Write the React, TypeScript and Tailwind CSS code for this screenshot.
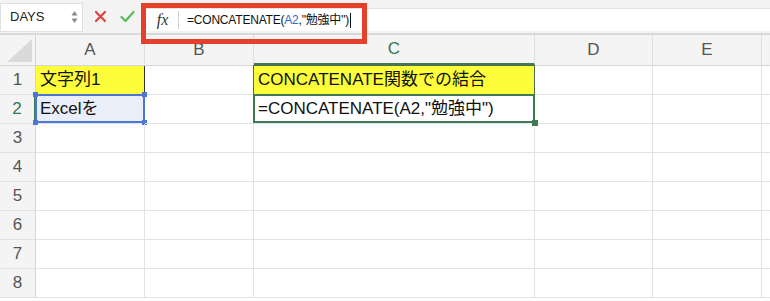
import React from 'react';

const FONT = { fontFamily: '"Liberation Sans", "Noto Sans CJK JP", sans-serif' };

const COLS = [
  { key: 'A', w: 'w-[109px]' },
  { key: 'B', w: 'w-[109px]' },
  { key: 'C', w: 'w-[281px]' },
  { key: 'D', w: 'w-[118px]' },
  { key: 'E', w: 'w-[109px]' },
];

const ROWS = [1, 2, 3, 4, 5, 6, 7, 8];

const Handle: React.FC<{ className: string }> = ({ className }) => (
  <span className={`absolute w-[5px] h-[5px] bg-[#4a76d4] ${className}`} />
);

const Cell: React.FC<{ row: number; col: string; w: string }> = ({ row, col, w }) => {
  const base = `${w} h-full shrink-0 border-r border-b border-[#e2e2e2] relative flex items-center px-[4px] text-[17px] text-[#111] whitespace-nowrap`;

  if (row === 1 && col === 'A') {
    return <div className={`${base} bg-[#fdfd3c] border-r-[#333]`}>文字列1</div>;
  }
  if (row === 1 && col === 'C') {
    return (
      <div className={`${base} bg-[#fdfd3c]`}>
        <span className="absolute inset-[-1px] border border-[#4b6b52] pointer-events-none" />
        CONCATENATE関数での結合
      </div>
    );
  }
  if (row === 2 && col === 'A') {
    return (
      <div className={`${base} bg-[#e9eef8]`}>
        <span className="absolute top-[-1px] left-[-1px] right-[-1px] bottom-0 border-2 border-[#4a76d4] pointer-events-none" />
        <Handle className="top-[-3px] right-[-3px]" />
        <Handle className="bottom-[-2px] right-[-3px]" />
        <Handle className="top-[-3px] left-[-3px]" />
        <Handle className="bottom-[-2px] left-[-3px]" />
        Excelを
      </div>
    );
  }
  if (row === 2 && col === 'C') {
    return (
      <div className={base}>
        <span className="absolute top-[-1px] left-[-1px] right-[-1px] bottom-0 border-2 border-[#3f7a55] pointer-events-none" />
        <span className="absolute bottom-[-3px] right-[-4px] w-[6px] h-[6px] bg-[#3f7a55] z-10" />
        =CONCATENATE(A2,"勉強中")
      </div>
    );
  }
  return <div className={base} />;
};

export default function App() {
  return (
    <div className="w-[770px] h-[301px] overflow-hidden bg-white relative" style={FONT}>
      {/* formula bar */}
      <div className="h-[35px] flex items-center bg-[#f3f3f3] border-b-2 border-[#d9d9d9]">
        <div className="w-[83px] h-[29px] mt-[1px] bg-white border border-[#e0e0e0] flex items-center pl-[9px] pr-[4px] shrink-0">
          <span className="flex-1 text-[13px] text-[#222]">DAYS</span>
          <svg width="7" height="16" viewBox="0 0 7 16">
            <polygon points="3.5,2 6.5,6.5 0.5,6.5" fill="#8a8a8a" />
            <polygon points="3.5,14 6.5,9.5 0.5,9.5" fill="#8a8a8a" />
          </svg>
        </div>
        <div className="w-[58px] flex items-center justify-around shrink-0 pl-[4px]">
          <svg width="13" height="13" viewBox="0 0 13 13">
            <path d="M2 2 L11 11 M11 2 L2 11" stroke="#d9443f" strokeWidth="2.2" strokeLinecap="round" />
          </svg>
          <svg width="15" height="13" viewBox="0 0 15 13">
            <path d="M1.5 7 L5.5 11 L13.5 2" stroke="#5cb85c" strokeWidth="2.2" fill="none" strokeLinecap="round" strokeLinejoin="round" />
          </svg>
        </div>
        <div className="flex-1 h-[23px] mt-[8px] self-start bg-white border-t border-[#e3e3e3] flex items-center">
          <span
            className="w-[31px] text-center italic text-[16px] text-[#333] ml-[6px]"
            style={{ fontFamily: '"Liberation Serif", serif' }}
          >
            fx
          </span>
          <span className="w-px h-[18px] bg-[#d0d0d0]" />
          <span className="ml-[8px] text-[12px] text-[#111] whitespace-nowrap tracking-[-0.2px]">
            =CONCATENATE(<span className="text-[#3565d0]">A2</span>,"勉強中")
          </span>
          <span className="w-px h-[15px] bg-[#111] ml-[1px]" />
        </div>
      </div>

      {/* annotation box */}
      <div className="absolute left-[141px] top-[3px] w-[226px] h-[41px] border-[5px] border-[#e5402a] pointer-events-none" />

      {/* column header */}
      <div className="h-[31px] flex bg-[#f4f4f4] border-b border-[#d6d6d6]">
        <div className="w-[36px] shrink-0 border-r border-[#d6d6d6] flex items-end justify-end p-[3px]">
          <svg width="25" height="23" viewBox="0 0 25 23">
            <polygon points="25,0 25,23 0,23" fill="#dadada" />
          </svg>
        </div>
        {COLS.map((c) => (
          <div
            key={c.key}
            className={`${c.w} shrink-0 border-r border-[#dedede] flex items-center justify-center text-[17px] ${
              c.key === 'C' ? 'text-[#2f7a4f] border-b-2 border-b-[#3f7a55]' : 'text-[#555]'
            }`}
          >
            {c.key}
          </div>
        ))}
        <div className="flex-1" />
      </div>

      {/* rows */}
      {ROWS.map((r) => (
        <div key={r} className="h-[29px] flex">
          <div
            className={`w-[36px] shrink-0 bg-[#f4f4f4] border-b border-[#e2e2e2] flex items-center justify-center text-[17px] ${
              r === 2 ? 'text-[#2f7a4f] border-r-2 border-r-[#3f7a55]' : 'text-[#555] border-r border-r-[#d6d6d6]'
            }`}
          >
            {r}
          </div>
          {COLS.map((c) => (
            <Cell key={c.key} row={r} col={c.key} w={c.w} />
          ))}
          <div className="flex-1 border-b border-[#e2e2e2]" />
        </div>
      ))}
    </div>
  );
}
